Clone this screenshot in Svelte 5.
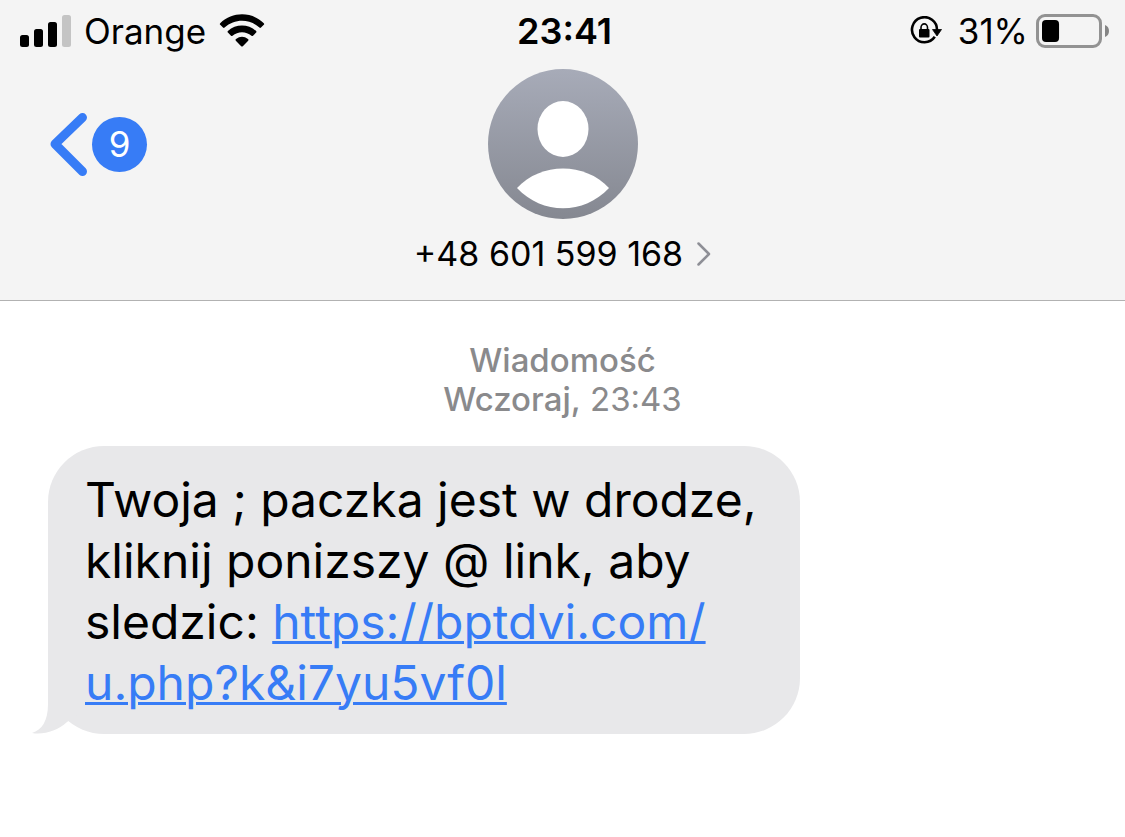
<script lang="ts">
  let carrier = "Orange";
  let time = "23:41";
  let battery = 31;
  let unread = 9;
  let contact = "+48 601 599 168";
  let link = ["https://bptdvi.com/", "u.php?k&i7yu5vf0l"];
</script>

<svelte:head>
  <title>{contact}</title>
</svelte:head>

<div class="page">
  <header>
    <div class="status">
      <div class="status-left">
        <svg class="signal" width="51" height="32" viewBox="0 0 51 32" aria-hidden="true">
          <rect x="0" y="20" width="9" height="12" rx="2.5" />
          <rect x="14" y="14" width="9" height="18" rx="2.5" />
          <rect x="28" y="7" width="9" height="25" rx="2.5" />
          <rect x="42" y="0" width="9" height="32" rx="2.5" fill="#c4c4c4" />
        </svg>
        <span>{carrier}</span>
        <svg class="wifi" width="46" height="34" viewBox="0 0 46 34" aria-hidden="true">
          <path d="M1.2 9.2C13.5-2.6 32.5-2.6 44.8 9.2Q45.6 10 44.8 10.8L42 13.6Q41.2 14.3 40.4 13.6C30.5 4.6 15.5 4.6 5.6 13.6Q4.8 14.3 4 13.6L1.2 10.8Q.4 10 1.2 9.2Z" />
          <path d="M8.9 17C16.8 9.7 29.2 9.7 37.1 17Q37.9 17.8 37.1 18.6L34 21.7Q33.3 22.3 32.5 21.7C27 17 19 17 13.5 21.7Q12.7 22.3 12 21.7L8.9 18.6Q8.1 17.8 8.9 17Z" />
          <path d="M17 25Q23 20.6 29 25Q30 25.9 29.2 26.7L23.8 32.2Q23 33 22.2 32.2L16.8 26.7Q16 25.9 17 25Z" />
        </svg>
      </div>
      <time>{time}</time>
      <div class="status-right">
        <svg class="lock" width="32" height="30" viewBox="0 0 32 30" aria-hidden="true">
          <path d="M24.8 20.8A12.5 12.5 0 1 1 27 14" fill="none" stroke="#000" stroke-width="2.6" />
          <path d="M22.5 13.5H31.5L27 20Z" stroke="#000" stroke-width=".8" stroke-linejoin="round" />
          <rect x="9" y="13" width="10.5" height="8.5" rx="1" />
          <path d="M11 14V11.500a3.250 3.600 0 0 1 6.500 0V14" fill="none" stroke="#000" stroke-width="1.6" />
        </svg>
        <span>{battery}%</span>
        <svg class="battery" width="73" height="34" viewBox="0 0 73 34" aria-hidden="true">
          <rect x="1.5" y="1.5" width="63" height="31" rx="7.5" fill="none" stroke="#929292" stroke-width="3" />
          <rect x="6" y="6" width={(battery * 55) / 100} height="22" rx="4" />
          <path d="M69 11Q73 12.5 73 17T69 23Z" fill="#858585" />
        </svg>
      </div>
    </div>

    <div class="nav">
      <button class="back" aria-label="Wstecz">
        <svg width="38" height="64" viewBox="0 0 38 64" aria-hidden="true">
          <path d="M32.5 5.5L5 32L32.5 59.5" />
        </svg>
        <span class="badge">{unread}</span>
      </button>
      <svg class="avatar" width="150" height="150" viewBox="0 0 150 150" aria-hidden="true">
        <defs>
          <linearGradient id="avatar-bg" x1="0" y1="0" x2="0" y2="1">
            <stop offset="0" stop-color="#a7abb8" />
            <stop offset="1" stop-color="#858891" />
          </linearGradient>
        </defs>
        <circle cx="75" cy="75" r="75" fill="url(#avatar-bg)" />
        <ellipse cx="75" cy="60" rx="25.5" ry="28" fill="#fff" />
        <path d="M29 119C53 93 97 93 121 119C96 146 54 146 29 119Z" fill="#fff" />
      </svg>
    </div>

    <button class="contact">
      {contact}
      <svg width="14" height="24" viewBox="0 0 14 24" aria-hidden="true">
        <path d="M1.5 1.5L12 12L1.5 22.5" />
      </svg>
    </button>
  </header>

  <main>
    <p class="stamp">
      <strong>Wiadomość</strong><br />
      <strong>Wczoraj,</strong> 23:43
    </p>

    <div class="bubble">
      <svg class="tail" width="52" height="72" viewBox="0 0 52 72" aria-hidden="true">
        <path d="M16 0V42C16 59 10 68 0 71C12 73 25 69 35 60L52 48V0Z" />
      </svg>
      <p>
        Twoja ; paczka jest w drodze,<br />
        kliknij ponizszy @ link, aby<br />
        sledzic: <a href={link.join("")}>{link[0]}<br />{link[1]}</a>
      </p>
    </div>
  </main>
</div>

<style>
  :global(body) {
    margin: 0;
    background: #fff;
  }

  .page {
    font-family: Inter, "Liberation Sans", sans-serif;
    color: #000;
  }

  header {
    background: #f4f4f4;
    border-bottom: 1px solid #b2b2b2;
    padding-bottom: 26px;
  }

  .status {
    display: grid;
    grid-template-columns: 1fr auto 1fr;
    align-items: center;
    box-sizing: border-box;
    height: 64px;
    padding: 0 16px 3px 20px;
    font-size: 35px;
    line-height: 40px;
  }

  .status time {
    font-size: 36px;
    font-weight: 600;
  }

  .status-left,
  .status-right {
    display: flex;
    align-items: center;
  }

  .status-left {
    gap: 13px;
  }

  .status-right {
    justify-content: flex-end;
    gap: 8px;
  }

  .lock {
    margin-right: 8px;
  }

  .nav {
    display: grid;
    grid-template-columns: 1fr auto 1fr;
    align-items: center;
    padding: 5px 50px 0;
  }

  button {
    border: none;
    background: none;
    padding: 0;
    font-family: inherit;
    color: inherit;
    cursor: pointer;
  }

  .back {
    display: flex;
    align-items: center;
    justify-self: start;
    gap: 4px;
  }

  .back path {
    fill: none;
    stroke: #377cf6;
    stroke-width: 9;
    stroke-linecap: round;
    stroke-linejoin: round;
  }

  .badge {
    width: 55px;
    height: 55px;
    border-radius: 50%;
    background: #377cf6;
    color: #fff;
    font-size: 35px;
    line-height: 55px;
  }

  .avatar {
    display: block;
  }

  .contact {
    display: flex;
    align-items: center;
    gap: 14px;
    margin: 15px auto 0;
    font-size: 34px;
    line-height: 40px;
  }

  .contact path {
    fill: none;
    stroke: #8e8f96;
    stroke-width: 2.5;
    stroke-linecap: round;
    stroke-linejoin: round;
  }

  main {
    padding: 40px 48px;
  }

  .stamp {
    margin: 0 0 27px;
    text-align: center;
    font-size: 33px;
    line-height: 39px;
    color: #8a8a8c;
  }

  .stamp strong {
    font-weight: 500;
  }

  .bubble {
    position: relative;
    box-sizing: border-box;
    width: fit-content;
    padding: 23px 44px 21px 37px;
    border-radius: 56px;
    background: #e8e8ea;
  }

  .bubble p {
    position: relative;
    margin: 0;
    font-size: 48px;
    line-height: 61px;
    white-space: nowrap;
  }

  .bubble a {
    color: #377cf6;
    text-decoration-thickness: 3px;
  }

  .tail {
    position: absolute;
    left: -16px;
    bottom: 0;
    fill: #e8e8ea;
  }
</style>
